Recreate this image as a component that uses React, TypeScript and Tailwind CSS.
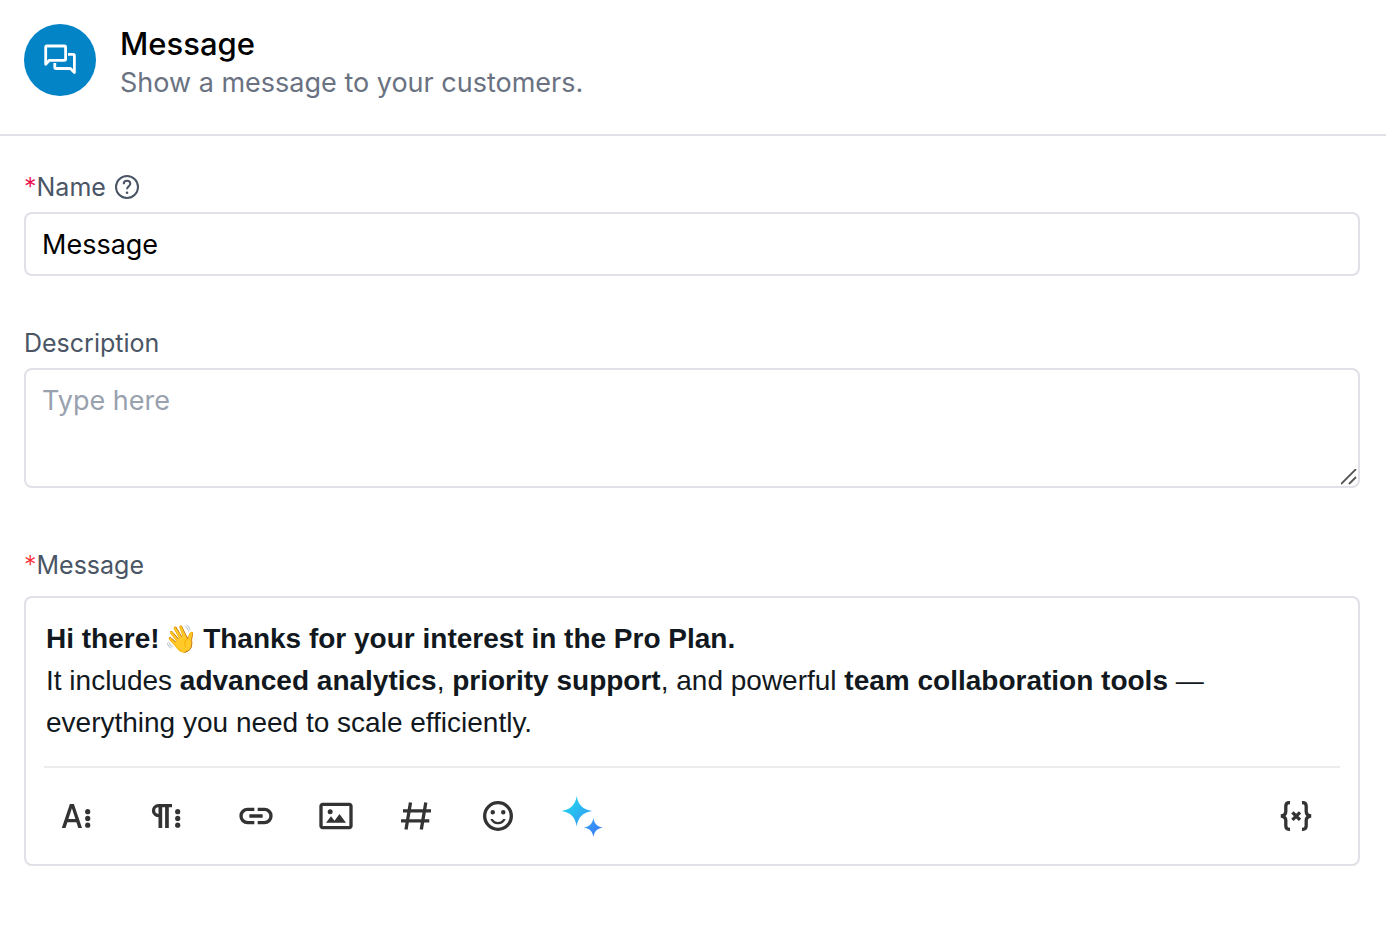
import type { ReactNode } from 'react';

const labelClass = 'flex items-center text-[25px] leading-8 text-gray-600';

function Required({ tone }: { tone: string }) {
  return <span className={tone}>*</span>;
}

function Dots() {
  return (
    <>
      <circle cx="26.7" cy="15.7" r="2.6" />
      <circle cx="26.7" cy="22.4" r="2.6" />
      <circle cx="26.7" cy="29.2" r="2.6" />
    </>
  );
}

function ChatIcon() {
  return (
    <svg viewBox="0 0 32 32" className="size-8" fill="none" stroke="white" strokeWidth="2.8" strokeLinejoin="round" strokeLinecap="butt" aria-hidden="true">
      <path d="M2.600 2H20.400a1.200 1.200 0 0 1 1.200 1.200V15.100a1.200 1.200 0 0 1-1.200 1.200H5.400L1.700 20.300V3a1 1 0 0 1 .9-1z" />
      <path d="M24 10.400h5.200a1.200 1.200 0 0 1 1.200 1.200v16.900L26.400 24.500H12a1.200 1.200 0 0 1-1.200-1.200V19" />
    </svg>
  );
}

function HelpIcon() {
  return (
    <svg viewBox="0 0 24 24" className="size-6" fill="none" stroke="currentColor" strokeWidth="2" aria-hidden="true">
      <circle cx="12" cy="12" r="11" />
      <path d="M8.700 9.200C8.700 7.100 10.100 5.800 12 5.800s3.300 1.200 3.300 3c0 2.300-3.300 2.600-3.300 5.400" />
      <circle cx="12" cy="17.700" r="1.300" fill="currentColor" stroke="none" />
    </svg>
  );
}

function ToolButton({ label, width, children }: { label: string; width: string; children: ReactNode }) {
  return (
    <button type="button" aria-label={label} className={`flex h-20 shrink-0 items-center justify-center rounded-md text-[#333333] hover:bg-gray-100 ${width}`}>
      {children}
    </button>
  );
}

export default function App() {
  return (
    <main className="min-h-screen bg-white font-['Inter',sans-serif] text-black">
      <header className="flex items-start gap-6 border-b-2 border-[#e0e0e6] px-6 pt-6 pb-8">
        <div className="flex size-[72px] shrink-0 items-center justify-center rounded-full bg-[#0284c7]">
          <ChatIcon />
        </div>
        <div>
          <h1 className="text-[31px] leading-10 font-medium">Message</h1>
          <p className="text-[27px] leading-[38px] text-gray-500">Show a message to your customers.</p>
        </div>
      </header>

      <form className="flex flex-col pt-[35px] pr-[26px] pb-8 pl-6">
        <div className="mb-[51px]">
          <div className={`${labelClass} mb-[9px]`}>
            <label htmlFor="name"><Required tone="font-light text-rose-600" />Name</label>
            <button type="button" aria-label="About the name" className="ml-[9px]"><HelpIcon /></button>
          </div>
          <input id="name" defaultValue="Message" className="block h-16 w-full rounded-lg border-2 border-[#e0e0e6] px-4 text-[27px] outline-none focus:border-sky-600" />
        </div>

        <div className="mb-[61px]">
          <label htmlFor="description" className={`${labelClass} mb-[9px]`}>Description</label>
          <div className="relative">
            <textarea id="description" placeholder="Type here" className="block h-[120px] w-full resize-y rounded-lg border-2 border-[#e0e0e6] px-4 py-[11px] text-[27px] leading-10 outline-none placeholder:text-gray-400 focus:border-sky-600 [&::-webkit-resizer]:hidden" />
            <svg viewBox="0 0 16 16" className="pointer-events-none absolute right-[3px] bottom-[3px] size-4" stroke="#555" strokeWidth="1.800" aria-hidden="true">
              <path d="M0 15 15 0M8 15l7-7" />
            </svg>
          </div>
        </div>

        <div>
          <div id="message-label" className={`${labelClass} mb-[15px]`}><Required tone="font-light text-red-500" />Message</div>
          <div className="rounded-lg border-2 border-[#e0e0e6]">
            <div
              role="textbox"
              aria-multiline="true"
              aria-labelledby="message-label"
              contentEditable
              suppressContentEditableWarning
              className="px-5 pt-5 pb-[22px] font-['Liberation_Sans',Arial,sans-serif] text-[28px] leading-[42px] text-[#111820] outline-none"
            >
              <p>
                <strong>Hi there! <span className="inline-flex w-7 justify-center text-[27px] leading-8">👋</span> Thanks for your interest in the Pro Plan.</strong>
              </p>
              <p>
                It includes <strong>advanced analytics</strong>, <strong>priority support</strong>, and powerful <strong>team collaboration tools</strong> — <span>everything you need to scale efficiently.</span>
              </p>
            </div>
            <div className="mx-[18px] h-0.5 bg-[#ececef]" />
            <div role="toolbar" aria-label="Formatting" className="flex items-center py-2 pr-[22px] pl-2.5">
              <ToolButton label="Text formatting" width="w-[90px]">
                <svg viewBox="0 0 40 40" className="size-10" fill="currentColor" aria-hidden="true">
                  <path fillRule="evenodd" d="M8.900 8h4L21 32h-3.700l-1.900-5.700H6.400L4.500 32H.8zM10.900 12.300 7.400 23h7z" />
                  <Dots />
                </svg>
              </ToolButton>
              <ToolButton label="Paragraph formatting" width="w-[90px]">
                <svg viewBox="0 0 40 40" className="size-10" fill="currentColor" aria-hidden="true">
                  <path fillRule="evenodd" d="M7.500 8H21v3.300h-3.200V32h-3.700V11.300h-2.900V32H7.500V21.300A6.500 6.500 0 0 1 7.500 8zM7.500 11.300a3.300 3.300 0 0 0 0 6.600z" />
                  <Dots />
                </svg>
              </ToolButton>
              <ToolButton label="Insert link" width="w-20">
                <svg viewBox="0 0 24 24" className="size-10" fill="currentColor" aria-hidden="true">
                  <path d="M11 17H7A5 5 0 0 1 7 7h4v2H7a3 3 0 0 0 0 6h4zM17 7h-4v2h4a3 3 0 0 1 0 6h-4v2h4a5 5 0 0 0 0-10zm-1 4H8v2h8z" />
                </svg>
              </ToolButton>
              <ToolButton label="Insert image" width="w-20">
                <svg viewBox="0 0 24 24" className="size-10" fill="currentColor" aria-hidden="true">
                  <path d="M14.200 11l3.800 5H6l3-3.900 2.100 2.700L14 11h.2zM8.500 11a1.500 1.500 0 1 0 0-3 1.500 1.500 0 0 0 0 3zM22 6v12c0 1.100-.9 2-2 2H4c-1.100 0-2-.9-2-2V6c0-1.100.9-2 2-2h16c1.100 0 2 .9 2 2zm-2 2.800V6H4v12h16V8.800z" />
                </svg>
              </ToolButton>
              <ToolButton label="Insert tag" width="w-20">
                <svg viewBox="0 0 40 40" className="size-10" fill="none" stroke="currentColor" strokeWidth="3.300" aria-hidden="true">
                  <path d="M14.500 6.500 10 33.500M29.800 6.500l-4.500 27M7 14.800h28M5 24.800h28.300" />
                </svg>
              </ToolButton>
              <ToolButton label="Insert emoji" width="w-[84px]">
                <svg viewBox="0 0 24 24" className="size-10" fill="currentColor" aria-hidden="true">
                  <path d="M11.991 3A9 9 0 1 0 21 12a8.996 8.996 0 0 0-9.009-9zM12 19a7 7 0 1 1 7-7 6.998 6.998 0 0 1-7 7zm3.105-5.200h1.504a4.945 4.945 0 0 1-9.218 0h1.504a3.578 3.578 0 0 0 6.210 0zM7.500 9.750a1.350 1.350 0 1 1 1.350 1.350A1.350 1.350 0 0 1 7.500 9.750zm6.300 0a1.350 1.350 0 1 1 1.350 1.350 1.350 1.350 0 0 1-1.350-1.350z" />
                </svg>
              </ToolButton>
              <ToolButton label="Write with AI" width="w-[84px]">
                <svg viewBox="-2 -2 44 44" className="size-11" aria-hidden="true">
                  <defs>
                    <linearGradient id="spark" gradientUnits="userSpaceOnUse" x1="6" y1="4" x2="36" y2="36">
                      <stop stopColor="#22d3ee" />
                      <stop offset="1" stopColor="#3b82f6" />
                    </linearGradient>
                  </defs>
                  <path fill="url(#spark)" d="M14.700 0C16.200 9 20.700 13.500 30.300 15 20.700 16.500 16.200 21 14.700 30.300 13.200 21 8.700 16.500-.5 15 8.700 13.500 13.200 9 14.700 0z" />
                  <path fill="url(#spark)" d="M31.400 22C32.400 27.500 35 30.500 40.700 31.600 35 32.700 32.400 35.500 31.400 41 30.400 35.500 27.800 32.700 22 31.600 27.800 30.500 30.400 27.500 31.400 22z" />
                </svg>
              </ToolButton>
              <div className="flex-1" />
              <ToolButton label="Insert variable" width="w-20">
                <svg viewBox="0 0 40 40" className="size-10" fill="none" stroke="currentColor" strokeWidth="3.300" aria-hidden="true">
                  <path d="M14 6.700h-.8c-2.200 0-3.400 1.300-3.400 3.500v5.300c0 2.700-1.500 4-4.800 4.500 3.300.5 4.800 1.800 4.800 4.500v5.300c0 2.200 1.200 3.500 3.400 3.500h.8M26 6.700h.8c2.200 0 3.400 1.300 3.400 3.500v5.300c0 2.700 1.500 4 4.800 4.500-3.300.5-4.800 1.800-4.800 4.500v5.300c0 2.200-1.200 3.500-3.400 3.500H26M16.400 16.300l7.600 7.600M24 16.300l-7.600 7.600" />
                </svg>
              </ToolButton>
            </div>
          </div>
        </div>
      </form>
    </main>
  );
}
